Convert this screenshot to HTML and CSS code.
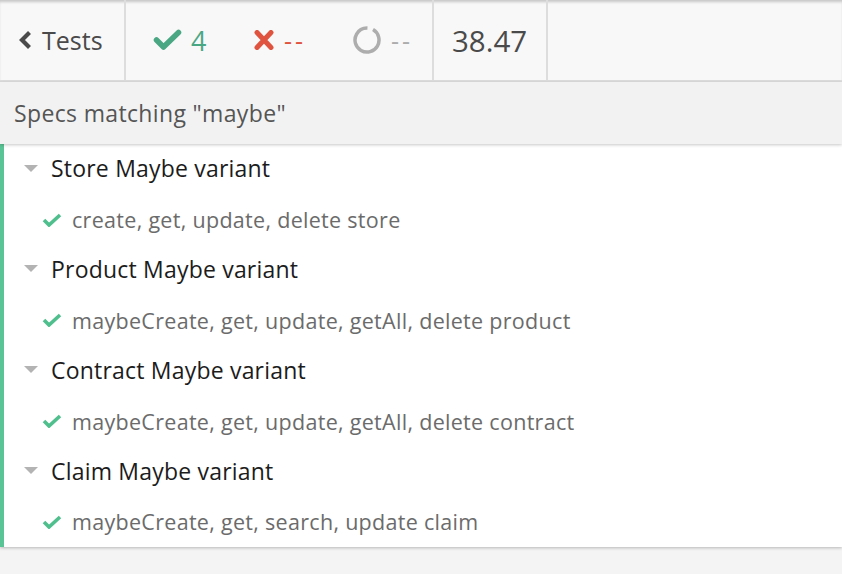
FILE: index.html
```html
<!DOCTYPE html>
<html>
<head>
<meta charset="utf-8">
<link rel="stylesheet" href="styles.css">
</head>
<body>
<header class="header">
  <div class="nav">
    <svg class="chevron" width="14" height="20" viewBox="0 0 14 20"><path d="M11.5 2.5 L4 10 L11.5 17.5" fill="none" stroke="#4a4a4a" stroke-width="4.2"/></svg>
    <span>Tests</span>
  </div>
  <div class="stats">
    <div class="stat passed">
      <svg width="29" height="22" viewBox="0 0 29 22"><polyline points="3.5,11 10.5,18 25.5,3.5" fill="none" stroke="#4aa783" stroke-width="5.5" stroke-linecap="round" stroke-linejoin="round"/></svg>
      <span class="count">4</span>
    </div>
    <div class="stat failed">
      <svg width="22" height="20" viewBox="0 0 22 20"><path d="M4 2.5 L18 17.5 M18 2.5 L4 17.5" fill="none" stroke="#e0533f" stroke-width="5" stroke-linecap="round"/></svg>
      <span class="dashes">--</span>
    </div>
    <div class="stat pending">
      <svg width="28" height="28" viewBox="0 0 28 28"><circle cx="14" cy="14" r="12" fill="none" stroke="#adadad" stroke-width="3.5" stroke-dasharray="69.1 6.3" transform="rotate(-60 14 14)"/></svg>
      <span class="dashes">--</span>
    </div>
  </div>
  <div class="duration">38.47</div>
  <div class="rest"></div>
</header>
<div class="filter">Specs matching "maybe"</div>
<ul class="runnables">
  <li class="suite">
    <div class="suite-title"><span class="caret"></span>Store Maybe variant</div>
    <div class="test"><svg class="tick" width="20" height="14" viewBox="0 0 20 14"><polyline points="2,7 7,12 18,2" fill="none" stroke="#4fbf8d" stroke-width="3.6"/></svg>create, get, update, delete store</div>
  </li>
  <li class="suite">
    <div class="suite-title"><span class="caret"></span>Product Maybe variant</div>
    <div class="test"><svg class="tick" width="20" height="14" viewBox="0 0 20 14"><polyline points="2,7 7,12 18,2" fill="none" stroke="#4fbf8d" stroke-width="3.6"/></svg>maybeCreate, get, update, getAll, delete product</div>
  </li>
  <li class="suite">
    <div class="suite-title"><span class="caret"></span>Contract Maybe variant</div>
    <div class="test"><svg class="tick" width="20" height="14" viewBox="0 0 20 14"><polyline points="2,7 7,12 18,2" fill="none" stroke="#4fbf8d" stroke-width="3.6"/></svg>maybeCreate, get, update, getAll, delete contract</div>
  </li>
  <li class="suite">
    <div class="suite-title"><span class="caret"></span>Claim Maybe variant</div>
    <div class="test"><svg class="tick" width="20" height="14" viewBox="0 0 20 14"><polyline points="2,7 7,12 18,2" fill="none" stroke="#4fbf8d" stroke-width="3.6"/></svg>maybeCreate, get, search, update claim</div>
  </li>
</ul>
</body>
</html>
```

FILE: styles.css
```css
* { box-sizing: border-box; }
html, body { margin: 0; padding: 0; }
body {
  width: 842px;
  height: 574px;
  overflow: hidden;
  background: #f4f4f4;
  font-family: "Open Sans", Lato, sans-serif;
}
.header {
  display: flex;
  height: 82px;
  background: #f8f8f8;
  border-bottom: 2px solid #dddddd;
  box-shadow: inset 0 3px 3px -1px rgba(0, 0, 0, 0.2);
  color: #4a4a4a;
  font-size: 25px;
}
.nav {
  width: 126px;
  border-right: 2px solid #dddddd;
  display: flex;
  align-items: center;
  padding-left: 18px;
  gap: 10px;
}
.chevron { flex: none; }
.stats {
  width: 308px;
  border-right: 2px solid #dddddd;
  display: flex;
  align-items: center;
  padding-left: 27px;
}
.stat {
  display: flex;
  align-items: center;
  gap: 9px;
}
.stat svg { flex: none; }
.count { font-size: 27px; }
.dashes { letter-spacing: 3px; }
.passed { color: #4aa783; width: 100px; }
.failed { color: #e0533f; width: 100px; }
.pending { color: #adadad; gap: 10px; }
.duration {
  width: 114px;
  border-right: 2px solid #dddddd;
  display: flex;
  align-items: center;
  padding-left: 18px;
  font-size: 29.5px;
}
.rest { flex: 1; }
.filter {
  position: relative;
  z-index: 1;
  height: 62px;
  background: #f2f2f2;
  display: flex;
  align-items: center;
  padding-left: 14px;
  font-size: 23px;
  letter-spacing: 0.35px;
  color: #555555;
  box-shadow: 0 1px 3px rgba(0, 0, 0, 0.22);
}
.runnables {
  list-style: none;
  margin: 0;
  padding: 0;
  background: #ffffff;
  border-left: 4px solid #5bc496;
  box-shadow: 0 1px 3px rgba(0, 0, 0, 0.25);
}
.suite-title, .test {
  height: 50.4px;
  display: flex;
  align-items: center;
}
.suite-title {
  padding-left: 20px;
  padding-bottom: 2px;
  font-size: 23px;
  letter-spacing: 0.2px;
  color: #1c1c1c;
}
.caret {
  width: 0;
  height: 0;
  border-left: 7px solid transparent;
  border-right: 7px solid transparent;
  border-top: 7px solid #b3b3b3;
  margin-right: 13px;
}
.test {
  padding-left: 38px;
  font-size: 21.5px;
  letter-spacing: 0.3px;
  color: #6b6b6b;
}
.tick {
  flex: none;
  margin-right: 10px;
}
```
